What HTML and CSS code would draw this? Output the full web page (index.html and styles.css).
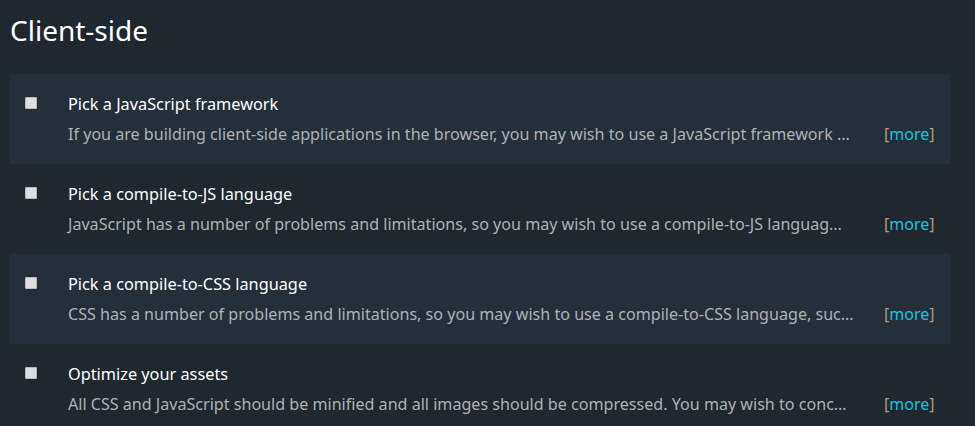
FILE: index.html
```html
<!DOCTYPE html>
<html lang="en">
<head>
    <meta charset="UTF-8">
    <title>Client-side</title>
    <link rel="stylesheet" href="styles.css">
</head>
<body>
    <h1>Client-side</h1>

    <div class="rules">
        <div class="rule">
            <input type="checkbox" class="check">
            <div class="rule-body">
                <div class="rule-title">Pick a JavaScript framework</div>
                <div class="rule-line">
                    <span class="rule-text">If you are building client-side applications in the browser, you may wish to use a JavaScript framework …</span>
                    <span class="more">[<a href="#">more</a>]</span>
                </div>
            </div>
        </div>
        <div class="rule">
            <input type="checkbox" class="check">
            <div class="rule-body">
                <div class="rule-title">Pick a compile-to-JS language</div>
                <div class="rule-line">
                    <span class="rule-text">JavaScript has a number of problems and limitations, so you may wish to use a compile-to-JS languag…</span>
                    <span class="more">[<a href="#">more</a>]</span>
                </div>
            </div>
        </div>
        <div class="rule">
            <input type="checkbox" class="check">
            <div class="rule-body">
                <div class="rule-title">Pick a compile-to-CSS language</div>
                <div class="rule-line">
                    <span class="rule-text">CSS has a number of problems and limitations, so you may wish to use a compile-to-CSS language, suc…</span>
                    <span class="more">[<a href="#">more</a>]</span>
                </div>
            </div>
        </div>
        <div class="rule">
            <input type="checkbox" class="check">
            <div class="rule-body">
                <div class="rule-title">Optimize your assets</div>
                <div class="rule-line">
                    <span class="rule-text">All CSS and JavaScript should be minified and all images should be compressed. You may wish to conc…</span>
                    <span class="more">[<a href="#">more</a>]</span>
                </div>
            </div>
        </div>
    </div>
</body>
</html>
```

FILE: styles.css
```css
html, body {
    height: 100%;
}
body {
    font-family: "Noto Sans", "Open Sans", sans-serif;
    background-color: #1f272f;
    color: #fff;
    margin: 0;
    padding: 0 25px 0 10px;
    overflow: hidden;
}
h1 {
    font-size: 28px;
    font-weight: 400;
    line-height: 34px;
    margin: 0;
    padding-top: 13px;
    padding-bottom: 27px;
}
.rule {
    display: flex;
    height: 90px;
    padding: 20px 15px 0;
    box-sizing: border-box;
}
.rule:nth-child(odd) {
    background-color: #252f3a;
}
.check {
    appearance: none;
    flex: none;
    width: 12px;
    height: 12px;
    margin: 3px 31px 0 0;
    background-color: #dedede;
    border: 1px solid #b5b8bb;
    border-radius: 1px;
}
.rule-body {
    flex: 1;
    min-width: 0;
}
.rule-title {
    font-size: 16.3px;
    line-height: 20px;
    margin-bottom: 10px;
}
.rule-line {
    display: flex;
    font-size: 16.1px;
    line-height: 20px;
    color: #aeb2b5;
}
.rule-text {
    flex: 1;
    min-width: 0;
    white-space: nowrap;
}
.more {
    flex: none;
    width: 51px;
    margin-left: 32px;
    color: #b59a78;
    font-size: 16px;
}
.more a {
    color: #1fc1dc;
    text-decoration: none;
}
```
